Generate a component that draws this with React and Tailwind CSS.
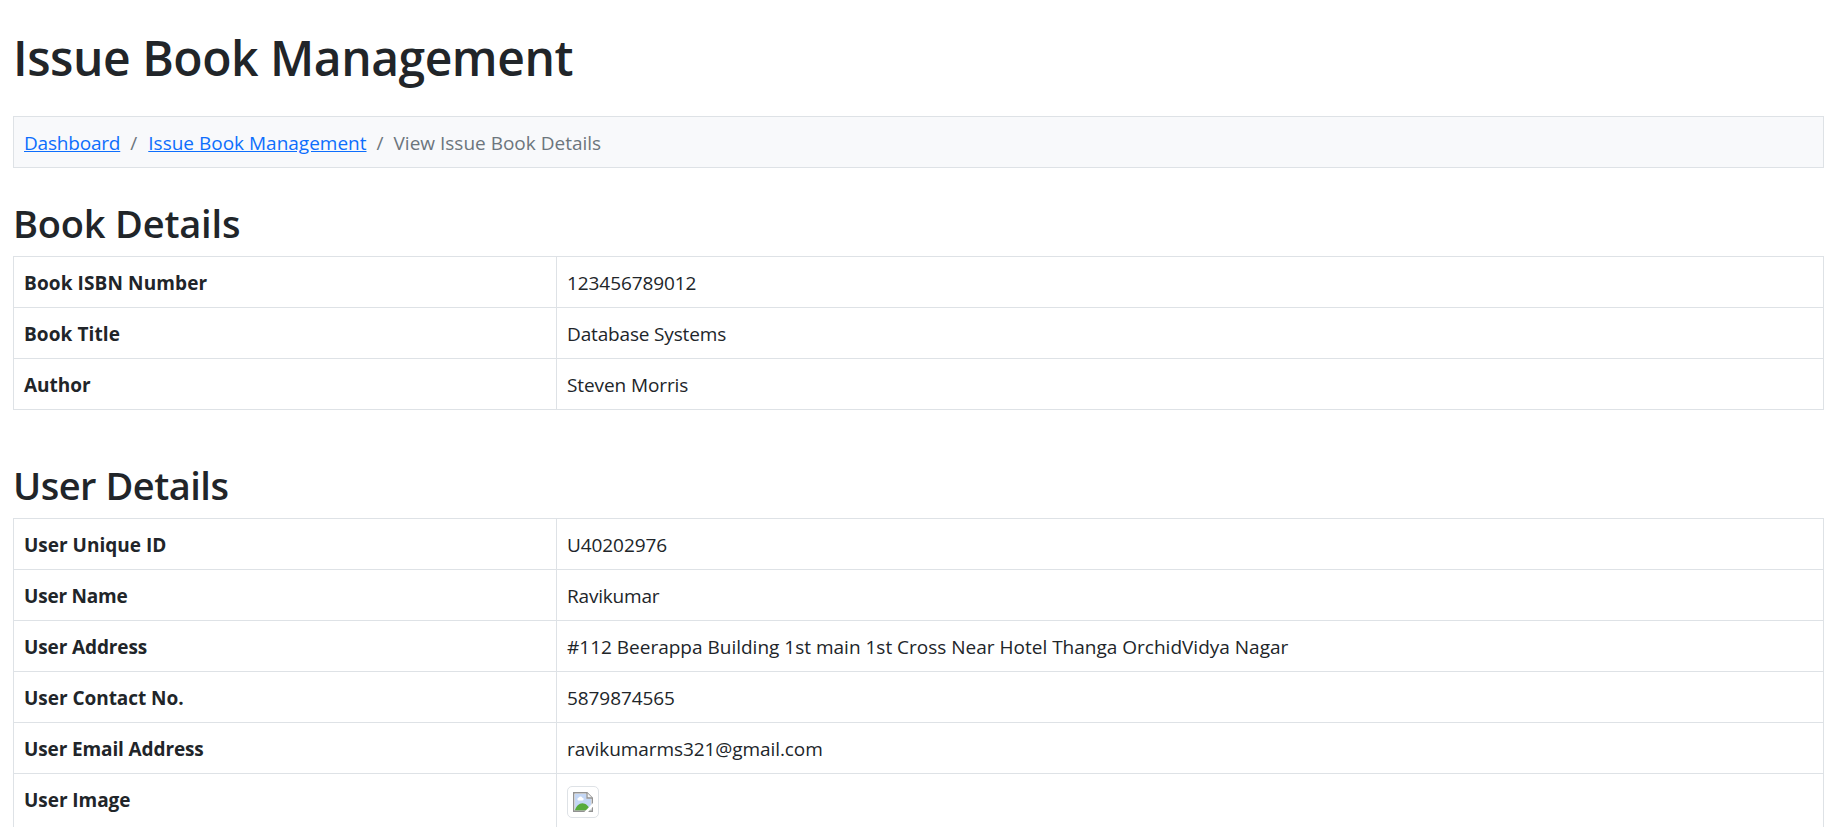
const bookRows = [
  { label: "Book ISBN Number", value: "123456789012", labelCls: "tracking-[0.12px]", valueCls: "tracking-[-0.08px]" },
  { label: "Book Title", value: "Database Systems", labelCls: "tracking-[0.09px]", valueCls: "tracking-[-0.16px]" },
  { label: "Author", value: "Steven Morris", labelCls: "", valueCls: "tracking-[-0.1px]" },
];

const userRows = [
  { label: "User Unique ID", value: "U40202976", labelCls: "", valueCls: "tracking-[-0.08px]" },
  { label: "User Name", value: "Ravikumar", labelCls: "tracking-[-0.2px]", valueCls: "tracking-[-0.2px]" },
  {
    label: "User Address",
    value: "#112 Beerappa Building 1st main 1st Cross Near Hotel Thanga OrchidVidya Nagar",
    labelCls: "tracking-[-0.12px]",
    valueCls: "",
  },
  { label: "User Contact No.", value: "5879874565", labelCls: "tracking-[-0.04px]", valueCls: "tracking-[-0.08px]" },
  { label: "User Email Address", value: "ravikumarms321@gmail.com", labelCls: "tracking-[-0.12px]", valueCls: "tracking-[-0.08px]" },
  { label: "User Image", value: <Thumbnail />, labelCls: "tracking-[-0.05px]", valueCls: "" },
];

function Thumbnail() {
  return (
    <span className="mt-2.5 mb-3 flex h-8 w-8 items-center justify-center rounded-[5px] border border-[#dee2e6] bg-white">
      <svg width="20" height="20" viewBox="0 0 20 20" aria-label="User image">
        <path d="M0.8 0.8H14L19.2 6V19.2H0.8Z" fill="#fff" />
        <path d="M2 2H13.4V6.6H18V18H2Z" fill="#c4d7f5" />
        <path d="M4.4 7.2a1.7 1.7 0 0 1 1.5-1.7 1.8 1.8 0 0 1 3.3.3 1.3 1.3 0 0 1 .3 2.6H5.4A1.2 1.2 0 0 1 4.4 7.2Z" fill="#fff" />
        <path d="M1.8 18.4C3.2 14.2 6 11.2 9.4 11.2C12.6 11.2 15.8 14 17.4 18.4Z" fill="#57ab3c" />
        <path d="M0.7 0.7H14L19.3 6V19.3H0.7Z" fill="none" stroke="#929292" strokeWidth="1.4" />
        <path d="M14 0.7V6H19.3" fill="#f5f5f5" stroke="#929292" strokeWidth="1.3" />
        <path d="M20.5 10.4V14.2L14.6 20.5H10.8Z" fill="#fff" />
      </svg>
    </span>
  );
}

function DetailTable({ rows }) {
  return (
    <table className="w-full table-fixed border-collapse">
      <colgroup>
        <col className="w-[543px]" />
        <col />
      </colgroup>
      <tbody>
        {rows.map((row) => (
          <tr key={row.label} className="h-[51px] align-top">
            <th className={`border border-[#dee2e6] px-2.5 pt-0.5 pb-0 text-left leading-[48px] font-bold ${row.labelCls}`}>{row.label}</th>
            <td className={`border border-[#dee2e6] px-2.5 pt-0.5 pb-0 leading-[48px] ${row.valueCls}`}>{row.value}</td>
          </tr>
        ))}
      </tbody>
    </table>
  );
}

export default function App() {
  return (
    <div className="h-[827px] overflow-hidden bg-white pr-2 pl-[13px] font-['Open_Sans',sans-serif] text-[19px] text-[#212529]">
      <h1 className="mt-7 mb-7 text-[48px] leading-[60px] font-semibold tracking-[-0.47px]">Issue Book Management</h1>

      <nav className="h-[52px] border border-[#dee2e6] bg-[#f8f9fb] px-2.5 pt-0.5 leading-[48px]">
        <ol className="flex gap-2.5">
          <li>
            <a href="#" className="tracking-[-0.2px] text-[#0d6efd] underline">Dashboard</a>
          </li>
          <li className="w-2 text-[#6c757d]">/</li>
          <li>
            <a href="#" className="text-[#0d6efd] underline">Issue Book Management</a>
          </li>
          <li className="w-[7px] text-[#6c757d]">/</li>
          <li className="text-[#6c757d]">View Issue Book Details</li>
        </ol>
      </nav>

      <h2 className="mt-[31px] mb-[9px] text-[38px] leading-[48px] font-semibold tracking-[-0.2px]">Book Details</h2>
      <DetailTable rows={bookRows} />

      <h2 className="mt-[51px] mb-[9px] text-[38px] leading-[48px] font-semibold tracking-[-0.5px]">User Details</h2>
      <DetailTable rows={userRows} />
    </div>
  );
}
